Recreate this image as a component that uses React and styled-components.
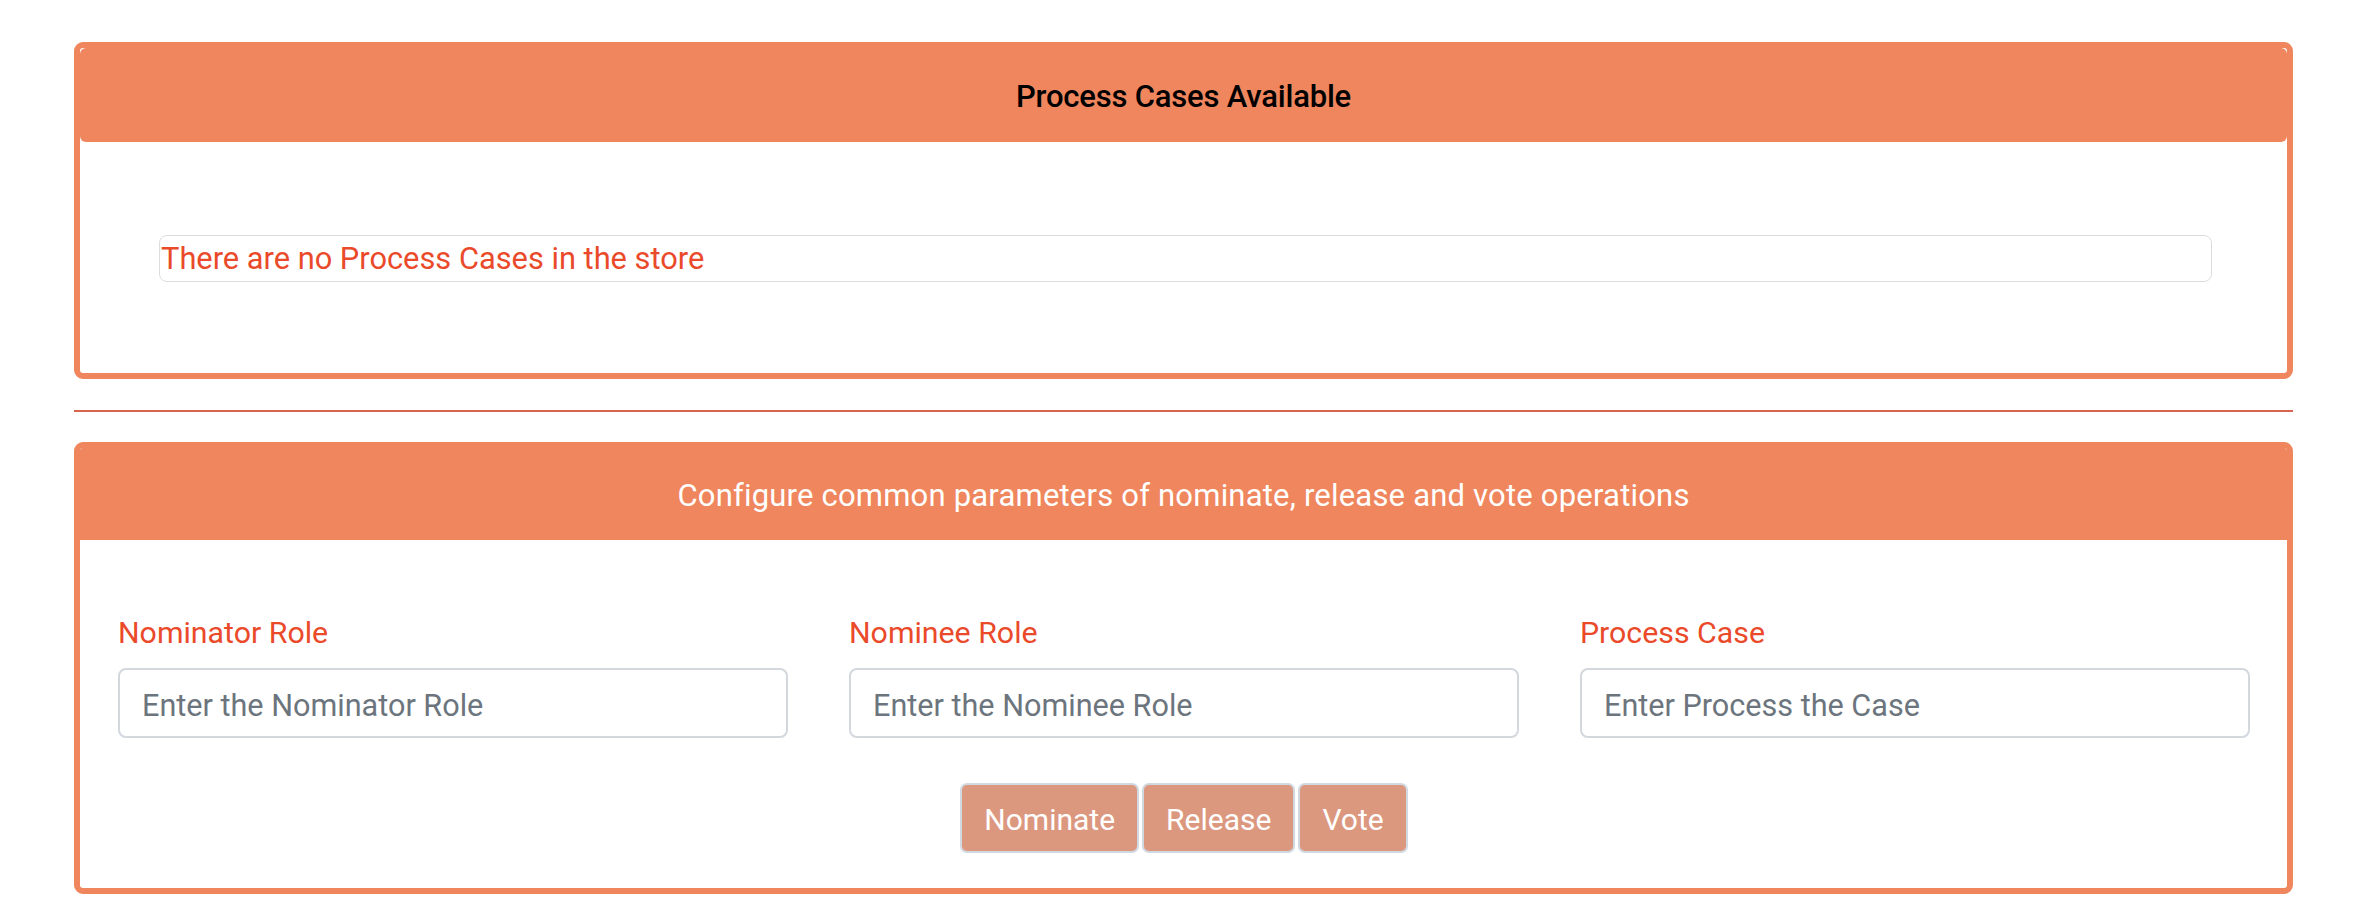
import React from 'react';
import styled, { createGlobalStyle } from 'styled-components';

const GlobalStyle = createGlobalStyle`
  body {
    margin: 0;
    background: #ffffff;
    font-family: Roboto, "Liberation Sans", Arial, sans-serif;
    font-size: 30px;
  }
`;

const Page = styled.div`
  padding: 42px 83px 30px 74px;
`;

const Card = styled.section`
  border: 6px solid #ef865d;
  border-radius: 9px;
  background: #ffffff;
  overflow: hidden;
`;

const CardHeader = styled.header`
  height: ${(p) => (p.$rounded ? '94px' : '92px')};
  display: flex;
  align-items: center;
  justify-content: center;
  padding-top: 3px;
  box-sizing: border-box;
  background: #ef865d;
  border-radius: ${(p) => (p.$rounded ? '6px' : '0')};
  color: ${(p) => (p.$dark ? '#000000' : '#ffffff')};
  font-size: 31px;
  font-weight: ${(p) => (p.$dark ? 500 : 400)};
  letter-spacing: ${(p) => (p.$dark ? '-0.2px' : '0.2px')};
`;

const CardBody = styled.div`
  padding: ${(p) => p.$pad};
`;

const MessageBox = styled.div`
  border: 1px solid #dcdcdc;
  border-radius: 8px;
  height: 45px;
  line-height: 45px;
  color: #ea4a2a;
  font-size: 30.8px;
  padding-left: 1px;
`;

const Divider = styled.hr`
  border: 0;
  height: 2px;
  margin: 31px 0 30px;
  background: #d8644e;
`;

const FieldGrid = styled.div`
  display: grid;
  grid-template-columns: repeat(3, 1fr);
  column-gap: 61px;
`;

const Field = styled.div`
  display: flex;
  flex-direction: column;
`;

const Label = styled.label`
  color: #ea4a2a;
  font-size: 30.3px;
  line-height: 44px;
  margin-top: 2px;
  margin-bottom: 13px;
`;

const Input = styled.input`
  box-sizing: border-box;
  height: 70px;
  width: 100%;
  border: 2px solid #d3d8de;
  border-radius: 8px;
  padding: 4px 22px 0;
  font-family: inherit;
  font-size: 30.6px;
  color: #495057;
  outline: none;

  &::placeholder {
    color: #6c757d;
  }
`;

const ButtonRow = styled.div`
  display: flex;
  justify-content: center;
  gap: 3px;
  margin-top: 45px;
`;

const ActionButton = styled.button`
  height: 70px;
  padding: 3px 22px 0;
  border: 2px solid #d0d8e2;
  border-radius: 7px;
  background: #dc987f;
  color: #ffffff;
  font-family: inherit;
  font-size: 30px;
  cursor: pointer;
`;

const fields = [
  { label: 'Nominator Role', placeholder: 'Enter the Nominator Role' },
  { label: 'Nominee Role', placeholder: 'Enter the Nominee Role' },
  { label: 'Process Case', placeholder: 'Enter Process the Case' },
];

export default function App() {
  return (
    <Page>
      <GlobalStyle />
      <Card>
        <CardHeader $rounded $dark>Process Cases Available</CardHeader>
        <CardBody $pad="93px 75px 91px 79px">
          <MessageBox>There are no Process Cases in the store</MessageBox>
        </CardBody>
      </Card>
      <Divider />
      <Card>
        <CardHeader>
          Configure common parameters of nominate, release and vote operations
        </CardHeader>
        <CardBody $pad="69px 37px 35px 38px">
          <FieldGrid>
            {fields.map((f) => (
              <Field key={f.label}>
                <Label>{f.label}</Label>
                <Input placeholder={f.placeholder} />
              </Field>
            ))}
          </FieldGrid>
          <ButtonRow>
            <ActionButton>Nominate</ActionButton>
            <ActionButton>Release</ActionButton>
            <ActionButton>Vote</ActionButton>
          </ButtonRow>
        </CardBody>
      </Card>
    </Page>
  );
}
